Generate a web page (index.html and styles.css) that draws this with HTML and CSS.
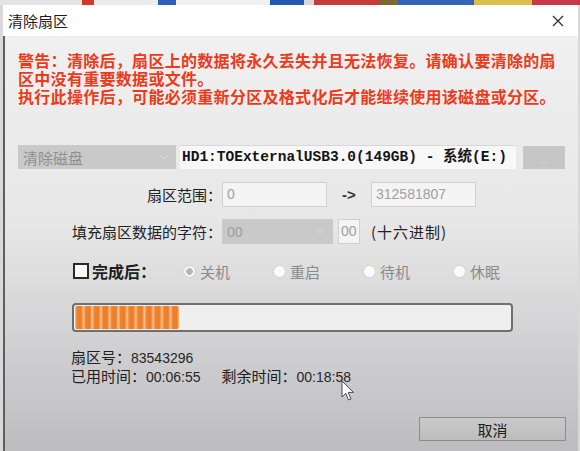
FILE: index.html
```html
<!DOCTYPE html>
<html lang="zh-CN">
<head>
    <meta charset="UTF-8">
    <meta name="viewport" content="width=device-width, initial-scale=1.0">
    <title>清除扇区</title>
    <link rel="stylesheet" href="styles.css">
</head>
<body>
    <div class="desk">
        <span class="d1"></span><span class="d2"></span><span class="d3"></span><span class="d4"></span>
        <span class="d5"></span><span class="d6"></span><span class="d7"></span><span class="d8"></span>
        <span class="d9"></span><span class="d10"></span><span class="d11"></span><span class="d12"></span>
    </div>

    <div class="window">
        <div class="titlebar">
            <span class="title">清除扇区</span>
            <svg class="close" width="12" height="12" viewBox="0 0 12 12">
                <path d="M1 1 L11 11 M11 1 L1 11" stroke="#2b2b2b" stroke-width="1.2" fill="none"/>
            </svg>
        </div>

        <div class="body">
            <div class="warning">
                <div>警告：清除后，扇区上的数据将永久丢失并且无法恢复。请确认要清除的扇</div>
                <div>区中没有重要数据或文件。</div>
                <div>执行此操作后，可能必须重新分区及格式化后才能继续使用该磁盘或分区。</div>
            </div>

            <div class="disk-row">
                <div class="combo combo-disk">
                    <span>清除磁盘</span>
                    <svg width="8" height="5" viewBox="0 0 8 5"><path d="M0.5 0.5 L4 4 L7.5 0.5" stroke="#e2e2e2" fill="none"/></svg>
                </div>
                <div class="disk-name">HD1:TOExternalUSB3.0(149GB) - 系统(E:)</div>
                <div class="btn-more">...</div>
            </div>

            <div class="field-row">
                <span class="lbl">扇区范围：</span>
                <div class="input input-range">0</div>
                <span class="arrow">-&gt;</span>
                <div class="input input-range">312581807</div>
            </div>

            <div class="field-row row-fill">
                <span class="lbl">填充扇区数据的字符：</span>
                <div class="combo combo-fill">
                    <span>00</span>
                    <svg width="8" height="5" viewBox="0 0 8 5"><path d="M0.5 0.5 L4 4 L7.5 0.5" stroke="#e2e2e2" fill="none"/></svg>
                </div>
                <div class="input input-byte">00</div>
                <span class="hex">(十六进制)</span>
            </div>

            <div class="after-row">
                <div class="check-group">
                    <span class="checkbox"></span>
                    <span class="check-lbl">完成后：</span>
                </div>
                <div class="radio-group"><span class="radio checked"></span><span>关机</span></div>
                <div class="radio-group"><span class="radio"></span><span>重启</span></div>
                <div class="radio-group"><span class="radio"></span><span>待机</span></div>
                <div class="radio-group"><span class="radio"></span><span>休眠</span></div>
            </div>

            <div class="progress">
                <div class="progress-fill" style="width: 104px"></div>
            </div>

            <div class="stats">
                <div>扇区号：<span class="num">83543296</span></div>
                <div>已用时间：<span class="num">00:06:55</span><span class="remain">剩余时间：<span class="num">00:18:58</span></span></div>
            </div>

            <div class="actions">
                <button class="btn-cancel">取消</button>
            </div>
        </div>

        <svg class="cursor" width="14" height="22" viewBox="0 0 14 22">
            <path d="M1 1 L1 17 L4.8 13.3 L7.6 20 L10 19 L7.2 12.4 L12.5 12.4 Z" fill="#fff" stroke="#4a4a4a" stroke-width="1" stroke-linejoin="round"/>
        </svg>
    </div>
</body>
</html>
```

FILE: styles.css
```css
body {
    margin: 0;
    background: #d9d9d9;
    font-family: "Liberation Sans", "Noto Sans CJK SC", sans-serif;
    height: 451px;
    overflow: hidden;
}

/* desktop behind the dialog */
.desk {
    display: flex;
    height: 5px;
}
.desk span { height: 5px; }
.d1 { width: 82px; background: #e4e4e4; }
.d2 { width: 12px; background: #d4382c; }
.d3 { width: 64px; background: #ececec; }
.d4 { width: 18px; background: #2d5fb8; }
.d5 { width: 94px; background: #f1f1f1; }
.d6 { width: 34px; background: #2457b0; }
.d7 { width: 10px; background: #d8d8d8; }
.d8 { width: 66px; background: #c43c3c; }
.d9 { width: 18px; background: #7a6a32; }
.d10 { width: 76px; background: #3464b4; }
.d11 { width: 58px; background: #d8c04a; }
.d12 { flex: 1; background: #c8384a; }

.window {
    position: relative;
    margin-left: 3px;
    width: 575px;
}

.titlebar {
    height: 31px;
    background: #fff;
    display: flex;
    align-items: center;
    justify-content: space-between;
    padding: 0 14px 0 5px;
}
.title {
    font-family: "Noto Sans CJK SC", sans-serif;
    font-size: 15px;
    color: #1c1c1c;
}

.body {
    height: 415px;
    border-left: 2px solid #5e5e5e;
    background: linear-gradient(#f1f0f0, #e7e7e8 45%, #bdbdbf);
    font-size: 15px;
    color: #222;
}

.warning {
    padding: 15px 0 0 13px;
    font-family: "Noto Sans CJK SC", sans-serif;
    font-size: 16px;
    font-weight: bold;
    letter-spacing: 0.3px;
    color: #ec3a1a;
}
.warning div {
    height: 18px;
    line-height: 18px;
    white-space: nowrap;
}

.disk-row {
    display: flex;
    align-items: center;
    margin: 40px 0 0 13px;
    height: 24px;
}
.combo {
    display: flex;
    align-items: center;
    justify-content: space-between;
    box-sizing: border-box;
    background: #c9c9c9;
    color: #8e8e8e;
    font-family: "Noto Sans CJK SC", sans-serif;
}
.combo-disk {
    width: 158px;
    height: 24px;
    padding: 0 8px 0 5px;
    font-size: 15px;
}
.disk-name {
    box-sizing: border-box;
    margin-left: 4px;
    width: 336px;
    height: 24px;
    padding-left: 2px;
    background: #f8f8f8;
    border-top: 1px solid #d8d8d8;
    font-family: "Liberation Mono", "Noto Sans CJK SC", monospace;
    font-size: 14.5px;
    font-weight: bold;
    line-height: 23px;
    color: #141414;
    white-space: nowrap;
}
.btn-more {
    margin-left: 7px;
    width: 42px;
    height: 23px;
    background: #c6c6c6;
    color: #dedede;
    font-size: 11px;
    text-align: center;
    line-height: 26px;
}

.field-row {
    display: flex;
    align-items: center;
    margin: 13px 0 0 13px;
    height: 25px;
}
.row-fill { margin-top: 12px; }
.lbl {
    width: 204px;
    text-align: right;
    font-family: "Noto Sans CJK SC", sans-serif;
    font-size: 15px;
    color: #222;
}
.input {
    box-sizing: border-box;
    height: 25px;
    background: #f4f4f4;
    border: 1px solid #d0d0d0;
    color: #a0a0a0;
    font-size: 14px;
    line-height: 23px;
    padding-left: 4px;
}
.input-range { width: 105px; }
.arrow {
    width: 44px;
    text-align: center;
    font-size: 15px;
    font-weight: bold;
    color: #333;
}
.combo-fill {
    width: 111px;
    height: 25px;
    padding: 0 9px 0 5px;
    font-family: "Liberation Sans", sans-serif;
    font-size: 14px;
    color: #9c9c9c;
}
.input-byte {
    margin-left: 5px;
    width: 22px;
    padding-left: 2px;
}
.hex {
    margin-left: 11px;
    font-family: "Noto Sans CJK SC", sans-serif;
    font-size: 15px;
    letter-spacing: 1px;
    color: #222;
}

.after-row {
    display: flex;
    align-items: center;
    margin: 17px 0 0 68px;
    height: 20px;
    font-family: "Noto Sans CJK SC", sans-serif;
}
.check-group {
    display: flex;
    align-items: center;
    width: 110px;
}
.checkbox {
    box-sizing: border-box;
    width: 16px;
    height: 16px;
    border: 2px solid #2a2a2a;
    background: #fafafa;
}
.check-lbl {
    margin-left: 3px;
    font-size: 16px;
    font-weight: bold;
    color: #1e1e1e;
}
.radio-group {
    display: flex;
    align-items: center;
    width: 90px;
    font-size: 15px;
    color: #8a8a8a;
}
.radio {
    box-sizing: border-box;
    width: 13px;
    height: 13px;
    margin-right: 4px;
    border-radius: 50%;
    border: 1px solid #d4d4d4;
    background: #fbfbfb;
}
.radio.checked {
    background: radial-gradient(circle, #b5b5b5 0 3px, #f6f6f6 3.5px);
}

.progress {
    box-sizing: border-box;
    margin: 22px 0 0 67px;
    width: 441px;
    height: 29px;
    padding: 1px;
    border: 2px solid #6f6f6f;
    border-radius: 4px;
    background: #efefef;
}
.progress-fill {
    height: 100%;
    background: repeating-linear-gradient(90deg, #f7bf92 0, #ee8430 2px, #ec7d26 6px, #f7bf92 8.7px);
    border-radius: 2px;
}

.stats {
    margin: 16px 0 0 66px;
    font-family: "Noto Sans CJK SC", sans-serif;
    font-size: 15px;
    line-height: 17px;
    color: #1e1e1e;
}
.num {
    font-family: "Liberation Sans", sans-serif;
    font-size: 14px;
    color: #262626;
}
.remain { margin-left: 21px; }

.actions {
    display: flex;
    justify-content: flex-end;
    margin-top: 31px;
    padding-right: 12px;
}
.btn-cancel {
    width: 147px;
    height: 24px;
    border: 1px solid #8c8c8c;
    background: linear-gradient(#c9c9c9, #bdbdbd);
    font-family: "Noto Sans CJK SC", sans-serif;
    font-size: 15px;
    color: #1e1e1e;
    padding: 0;
}

.cursor {
    position: absolute;
    left: 338px;
    top: 375px;
}
```
